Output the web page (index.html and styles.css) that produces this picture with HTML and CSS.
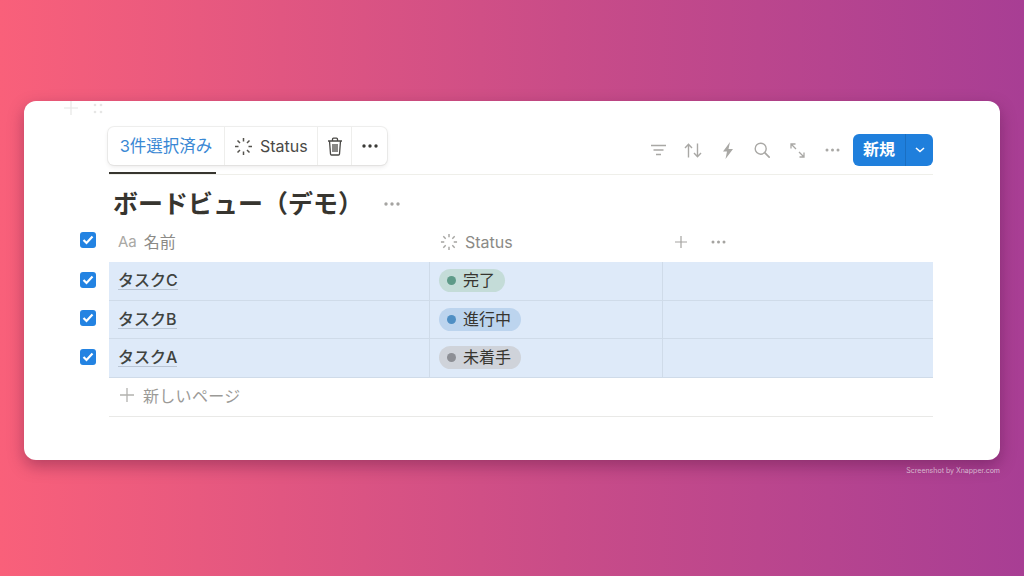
FILE: index.html
```html
<!DOCTYPE html>
<html lang="ja">
<head>
  <meta charset="UTF-8">
  <title>ボードビュー（デモ）</title>
  <link rel="stylesheet" href="styles.css">
</head>
<body>
  <div class="card">
    <div class="handles">
      <svg width="14" height="14" viewBox="0 0 14 14"><path d="M7 0v14M0 7h14" stroke="#e6e6e5" stroke-width="1.2" fill="none"/></svg>
      <svg width="10" height="14" viewBox="0 0 10 14"><g fill="#e6e6e5"><circle cx="2" cy="4" r="1.3"/><circle cx="8" cy="4" r="1.3"/><circle cx="2" cy="11" r="1.3"/><circle cx="8" cy="11" r="1.3"/></g></svg>
    </div>

    <div class="topbar">
      <div class="tab"></div>
      <div class="tools">
        <svg class="tool" width="15" height="12" viewBox="0 0 15 12"><path d="M0 1.500h15M2.500 6h10M5 10.500h5" stroke="#a9a8a5" stroke-width="1.500" fill="none"/></svg>
        <svg class="tool" width="18" height="15" viewBox="0 0 18 15"><path d="M4.500 14.500V1.500M1 5l3.500-3.700L8 5M13.500 .5v13M10 10l3.500 3.700L17 10" stroke="#a9a8a5" stroke-width="1.400" fill="none"/></svg>
        <svg class="tool" width="12" height="17" viewBox="0 0 12 17"><path d="M8 0 1 9.500h4L3.500 17 11 7H6.500z" fill="#a9a8a5"/></svg>
        <svg class="tool" width="16" height="16" viewBox="0 0 16 16"><circle cx="6.700" cy="6.700" r="5.500" stroke="#a9a8a5" stroke-width="1.400" fill="none"/><path d="m10.700 10.700 5 5" stroke="#a9a8a5" stroke-width="1.700"/></svg>
        <svg class="tool" width="15" height="15" viewBox="0 0 15 15"><path d="M1 1l5 5M1 5.500V1h4.500M14 14 9 9M14 9.500V14H9.500" stroke="#a9a8a5" stroke-width="1.300" fill="none"/></svg>
        <svg class="tool" width="15" height="4" viewBox="0 0 15 4"><g fill="#a9a8a5"><circle cx="2" cy="2" r="1.500"/><circle cx="7.500" cy="2" r="1.500"/><circle cx="13" cy="2" r="1.500"/></g></svg>
        <div class="new-btn">
          <span class="new-label">新規</span>
          <span class="new-arrow"><svg width="10" height="6" viewBox="0 0 10 6"><path d="m1 1 4 3.500L9 1" stroke="#fff" stroke-width="1.600" fill="none"/></svg></span>
        </div>
      </div>
    </div>

    <div class="selection">
      <span class="sel-count">3件選択済み</span>
      <span class="sel-item">
        <svg width="19" height="19" viewBox="0 0 19 19"><path d="M9.500 1v3.500M9.500 14.500V18M1 9.500h3.500M14.500 9.500H18M3.500 3.500 6 6M13 13l2.500 2.500M3.500 15.500 6 13M13 6l2.500-2.500" stroke="#55534e" stroke-width="1.500" fill="none"/></svg>
        Status
      </span>
      <span class="sel-icon">
        <svg width="16" height="19" viewBox="0 0 16 19"><path d="M1 4h14M5.500 4V2.200q0-1 1-1h3q1 0 1 1V4M2.500 4l1 13q.1 1 1 1h7q.9 0 1-1l1-13M6 7v8M8 7v8M10 7v8" stroke="#4a4946" stroke-width="1.300" fill="none"/></svg>
      </span>
      <span class="sel-icon">
        <svg width="16" height="4" viewBox="0 0 16 4"><g fill="#3b3a37"><circle cx="2" cy="2" r="1.700"/><circle cx="8" cy="2" r="1.700"/><circle cx="14" cy="2" r="1.700"/></g></svg>
      </span>
    </div>

    <div class="title-row">
      <h1>ボードビュー（デモ）</h1>
      <svg width="16" height="4" viewBox="0 0 16 4"><g fill="#a5a4a1"><circle cx="2" cy="2" r="1.700"/><circle cx="8" cy="2" r="1.700"/><circle cx="14" cy="2" r="1.700"/></g></svg>
    </div>

    <div class="row head">
      <span class="check"><svg width="12" height="10" viewBox="0 0 12 10"><path d="m1.500 5 3 3 6-6.500" stroke="#fff" stroke-width="2.200" fill="none"/></svg></span>
      <div class="cell name"><span class="aa">Aa</span>名前</div>
      <div class="cell status">
        <svg width="18" height="18" viewBox="0 0 19 19"><path d="M9.500 1v3.500M9.500 14.500V18M1 9.500h3.500M14.500 9.500H18M3.500 3.500 6 6M13 13l2.500 2.500M3.500 15.500 6 13M13 6l2.500-2.500" stroke="#a5a4a1" stroke-width="1.500" fill="none"/></svg>
        Status
      </div>
      <div class="cell extra">
        <svg width="12" height="12" viewBox="0 0 12 12"><path d="M6 0v12M0 6h12" stroke="#a5a4a1" stroke-width="1.200" fill="none"/></svg>
        <svg width="15" height="4" viewBox="0 0 15 4"><g fill="#a5a4a1"><circle cx="2" cy="2" r="1.500"/><circle cx="7.500" cy="2" r="1.500"/><circle cx="13" cy="2" r="1.500"/></g></svg>
      </div>
    </div>

    <div class="row task">
      <span class="check"><svg width="12" height="10" viewBox="0 0 12 10"><path d="m1.500 5 3 3 6-6.500" stroke="#fff" stroke-width="2.200" fill="none"/></svg></span>
      <div class="cell name"><span class="task-name">タスクC</span></div>
      <div class="cell status"><span class="pill green"><i></i>完了</span></div>
      <div class="cell extra"></div>
    </div>
    <div class="row task">
      <span class="check"><svg width="12" height="10" viewBox="0 0 12 10"><path d="m1.500 5 3 3 6-6.500" stroke="#fff" stroke-width="2.200" fill="none"/></svg></span>
      <div class="cell name"><span class="task-name">タスクB</span></div>
      <div class="cell status"><span class="pill blue"><i></i>進行中</span></div>
      <div class="cell extra"></div>
    </div>
    <div class="row task">
      <span class="check"><svg width="12" height="10" viewBox="0 0 12 10"><path d="m1.500 5 3 3 6-6.500" stroke="#fff" stroke-width="2.200" fill="none"/></svg></span>
      <div class="cell name"><span class="task-name">タスクA</span></div>
      <div class="cell status"><span class="pill gray"><i></i>未着手</span></div>
      <div class="cell extra"></div>
    </div>

    <div class="new-page">
      <svg width="14" height="14" viewBox="0 0 14 14"><path d="M7 0v14M0 7h14" stroke="#b3b2af" stroke-width="1.300" fill="none"/></svg>
      新しいページ
    </div>
  </div>
  <p class="credit">Screenshot by Xnapper.com</p>
</body>
</html>
```

FILE: styles.css
```css
* {
  box-sizing: border-box;
}
html, body {
  height: 100%;
}
body {
  margin: 0;
  height: 576px;
  overflow: hidden;
  padding: 101px 24px 0;
  background: linear-gradient(90deg, #f9607a 0%, #c94c88 55%, #a83e94 100%);
  font-family: Inter, "Noto Sans CJK JP", sans-serif;
  color: #37352f;
}
.card {
  position: relative;
  height: 359px;
  padding: 33px 67px 0 85px;
  background: #fff;
  border-radius: 12px;
  box-shadow: 0 6px 16px rgba(60, 10, 50, .35);
}
.handles {
  position: absolute;
  left: 40px;
  top: 0;
  display: flex;
  gap: 15px;
}
.topbar {
  display: flex;
  justify-content: space-between;
  height: 41px;
  border-bottom: 1px solid #efefea;
}
.tab {
  align-self: flex-end;
  width: 107px;
  height: 2px;
  background: #37352f;
}
.tools {
  display: flex;
  align-items: center;
  height: 32px;
}
.tool {
  margin-right: 20px;
}
.tool:first-child {
  margin-right: 18px;
}
.tool:nth-child(6) {
  margin-right: 13px;
}
.new-btn {
  display: flex;
  width: 80px;
  height: 32px;
  color: #fff;
  background: #1f7fdc;
  border-radius: 6px;
  font-weight: 600;
  font-size: 16px;
}
.new-label {
  flex: 1;
  text-align: center;
  line-height: 30px;
  border-right: 1px solid #1a6fc2;
}
.new-arrow {
  display: flex;
  align-items: center;
  justify-content: center;
  width: 27px;
}
.selection {
  position: absolute;
  left: 84px;
  top: 26px;
  display: flex;
  height: 38px;
  background: #fff;
  border-radius: 6px;
  box-shadow: 0 0 0 1px rgba(55, 53, 47, .07), 0 2px 4px rgba(55, 53, 47, .1);
}
.selection > span {
  display: flex;
  align-items: center;
  border-right: 1px solid #eeeeec;
}
.selection > span:last-child {
  border-right: 0;
}
.sel-count {
  width: 117px;
  justify-content: center;
  padding-bottom: 3px;
  font-size: 16.500px;
  color: #3a88d4;
}
.sel-item {
  width: 93px;
  padding-left: 9px;
  gap: 7px;
  font-size: 16px;
  color: #4a4946;
}
.sel-icon {
  width: 34px;
  justify-content: center;
}
.sel-icon:last-child {
  width: 35px;
}
.title-row {
  display: flex;
  align-items: center;
  gap: 21px;
  height: 50px;
  padding: 8px 0 0 4px;
}
h1 {
  margin: 0;
  font-size: 25px;
  font-weight: 700;
  line-height: 1;
}
.row {
  position: relative;
  display: grid;
  grid-template-columns: 321px 233px 270px;
}
.check {
  position: absolute;
  left: -29px;
  top: 50%;
  display: flex;
  align-items: center;
  justify-content: center;
  width: 16px;
  height: 16px;
  margin-top: -9px;
  background: #2383e2;
  border-radius: 3px;
}
.head {
  height: 37px;
  color: #8b8a86;
  font-size: 16px;
}
.head .check {
  margin-top: -12px;
}
.head .cell {
  padding-bottom: 3px;
}
.head .name {
  padding-bottom: 5px;
}
.task {
  height: 38.500px;
  background: #deeaf9;
  border-bottom: 1px solid #cfdbe9;
  font-size: 16px;
}
.cell {
  display: flex;
  align-items: center;
  padding-left: 9px;
}
.task .cell {
  border-right: 1px solid #cfdbe9;
}
.task .cell:last-child {
  border-right: 0;
}
.aa {
  margin-right: 7px;
  font-size: 15px;
  color: #aaa9a5;
}
.head .status {
  gap: 7px;
  padding-left: 10px;
}
.head .extra {
  gap: 24px;
  padding-left: 12px;
}
.task-name {
  font-weight: 500;
  color: #40433f;
  border-bottom: 1px solid #b9c5d4;
  line-height: 18px;
}
.pill {
  display: inline-flex;
  align-items: center;
  gap: 7px;
  height: 23px;
  padding: 0 10px 3px 8px;
  border-radius: 12px;
  color: #37352f;
}
.pill i {
  width: 9px;
  height: 9px;
  margin-top: 3px;
  border-radius: 50%;
}
.green { background: #c4dcd8; }
.green i { background: #5e9a88; }
.blue { background: #bcd4ee; }
.blue i { background: #4f8fc4; }
.gray { background: #cfd3da; }
.gray i { background: #8d8f95; }
.new-page {
  display: flex;
  align-items: center;
  gap: 9px;
  height: 39px;
  padding: 0 0 3px 11px;
  color: #9b9a97;
  font-size: 16px;
  letter-spacing: .3px;
  border-bottom: 1px solid #e9e9e7;
}
.credit {
  margin: 6px 0 0;
  text-align: right;
  color: rgba(255, 255, 255, .7);
  font-size: 7px;
}
```
